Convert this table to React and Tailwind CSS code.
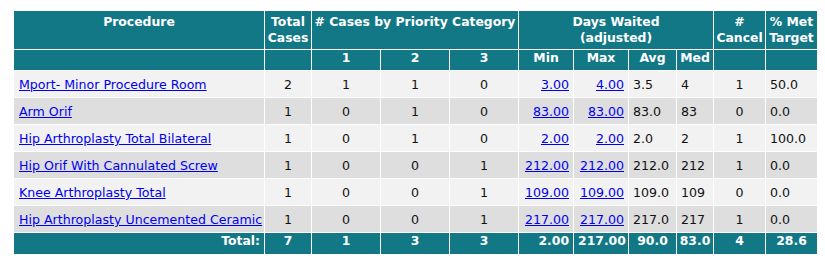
import React from "react";

const rows = [
  ["Mport- Minor Procedure Room", 2, 1, 1, 0, "3.00", "4.00", "3.5", "4", 1, "50.0"],
  ["Arm Orif", 1, 0, 1, 0, "83.00", "83.00", "83.0", "83", 0, "0.0"],
  ["Hip Arthroplasty Total Bilateral", 1, 0, 1, 0, "2.00", "2.00", "2.0", "2", 1, "100.0"],
  ["Hip Orif With Cannulated Screw", 1, 0, 0, 1, "212.00", "212.00", "212.0", "212", 1, "0.0"],
  ["Knee Arthroplasty Total", 1, 0, 0, 1, "109.00", "109.00", "109.0", "109", 0, "0.0"],
  ["Hip Arthroplasty Uncemented Ceramic", 1, 0, 0, 1, "217.00", "217.00", "217.0", "217", 1, "0.0"],
];

export default function App() {
  const th = "bg-[#137886] text-white font-bold p-0 align-top text-[12.4px]";
  const link = "text-[#0000ee] underline";
  return (
    <div className="pl-[13px] pt-[10px] bg-white" style={{ fontFamily: "'DejaVu Sans', Verdana, sans-serif" }}>
      <table className="border-separate border-spacing-[1px] table-fixed text-[12.6px] leading-[16px] text-[#111]" style={{ width: 805 }}>
        <colgroup>
          <col className="w-[250px]" />
          <col className="w-[46px]" />
          <col className="w-[68px]" />
          <col className="w-[68px]" />
          <col className="w-[68px]" />
          <col className="w-[54px]" />
          <col className="w-[54px]" />
          <col className="w-[47px]" />
          <col className="w-[36px]" />
          <col className="w-[51px]" />
          <col className="w-[51px]" />
        </colgroup>
        <thead>
          <tr className="h-[38px]">
            <th className={`${th} pt-[3px]`}>Procedure</th>
            <th className={`${th} pt-[3px]`}>Total<br />Cases</th>
            <th className={`${th} pt-[3px] whitespace-nowrap`} colSpan={3}># Cases by Priority Category</th>
            <th className={`${th} pt-[3px]`} colSpan={4}>Days Waited<br />(adjusted)</th>
            <th className={`${th} pt-[3px]`}>#<br />Cancel</th>
            <th className={`${th} pt-[3px] whitespace-nowrap`}>% Met<br />Target</th>
          </tr>
          <tr className="h-[20px]">
            <th className={`${th} align-middle`}></th>
            <th className={`${th} align-middle`}></th>
            <th className={`${th} align-middle`}>1</th>
            <th className={`${th} align-middle`}>2</th>
            <th className={`${th} align-middle`}>3</th>
            <th className={`${th} align-middle`}>Min</th>
            <th className={`${th} align-middle`}>Max</th>
            <th className={`${th} align-middle`}>Avg</th>
            <th className={`${th} align-middle`}>Med</th>
            <th className={`${th} align-middle`}></th>
            <th className={`${th} align-middle`}></th>
          </tr>
        </thead>
        <tbody>
          {rows.map((r, i) => {
            const bg = i % 2 === 0 ? "bg-[#f2f2f2]" : "bg-[#dedede]";
            const td = `${bg} px-[4px] pt-[2px] pb-0 align-middle whitespace-nowrap`;
            return (
              <tr key={i} className="h-[26px]">
                <td className={`${td} text-left pl-[5px]`}><a href="#" className={link}>{r[0]}</a></td>
                <td className={`${td} text-center`}>{r[1]}</td>
                <td className={`${td} text-center`}>{r[2]}</td>
                <td className={`${td} text-center`}>{r[3]}</td>
                <td className={`${td} text-center`}>{r[4]}</td>
                <td className={`${td} text-right`}><a href="#" className={link}>{r[5]}</a></td>
                <td className={`${td} text-right`}><a href="#" className={link}>{r[6]}</a></td>
                <td className={`${td} text-left`}>{r[7]}</td>
                <td className={`${td} text-left`}>{r[8]}</td>
                <td className={`${td} text-center`}>{r[9]}</td>
                <td className={`${td} text-left`}>{r[10]}</td>
              </tr>
            );
          })}
          <tr className="h-[21px]">
            <td className={`${th} align-middle text-right px-[4px]`}>Total:</td>
            <td className={`${th} align-middle text-center`}>7</td>
            <td className={`${th} align-middle text-center`}>1</td>
            <td className={`${th} align-middle text-center`}>3</td>
            <td className={`${th} align-middle text-center`}>3</td>
            <td className={`${th} align-middle text-right px-[4px]`}>2.00</td>
            <td className={`${th} align-middle text-right px-[4px]`}>217.00</td>
            <td className={`${th} align-middle text-center`}>90.0</td>
            <td className={`${th} align-middle text-center`}>83.0</td>
            <td className={`${th} align-middle text-center`}>4</td>
            <td className={`${th} align-middle text-center`}>28.6</td>
          </tr>
        </tbody>
      </table>
    </div>
  );
}
